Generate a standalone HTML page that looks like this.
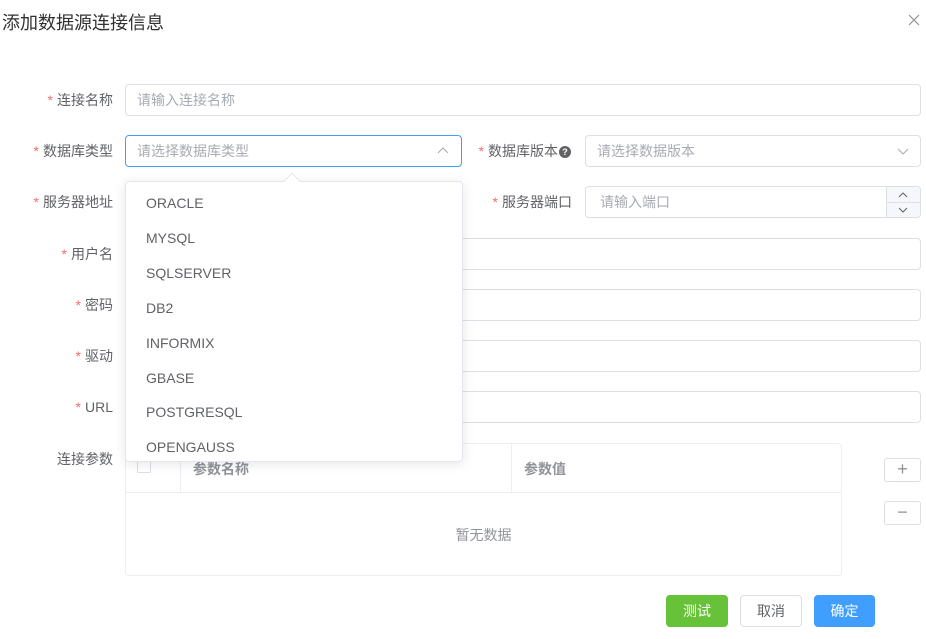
<!DOCTYPE html>
<html><head><meta charset="utf-8"><style>
*{box-sizing:border-box;margin:0;padding:0}
body{width:926px;height:639px;background:#fff;font-family:"Liberation Sans","Noto Sans CJK SC",sans-serif;position:relative;overflow:hidden;color:#606266}
.a{position:absolute}
.lbl{position:absolute;font-size:14px;color:#606266;text-align:right;line-height:32px}
.lbl i{color:#f56c6c;font-style:normal;margin-right:4px}
.in{position:absolute;height:32px;border:1px solid #dcdfe6;border-radius:4px;font-size:14px;color:#a8abb2;line-height:30px;padding-left:11px;background:#fff}
.it{position:absolute;left:146px;font-size:14px;color:#606266}
.btn{position:absolute;height:32px;border-radius:4px;font-size:14px;line-height:32px;text-align:center;top:595px}
</style></head><body>
<div class="a" style="left:2px;top:9px;font-size:18px;color:#303133">添加数据源连接信息</div>
<svg class="a" style="left:908px;top:14px" width="12" height="12"><path d="M1 1L11 11M11 1L1 11" stroke="#909399" stroke-width="1.2"/></svg>

<div class="lbl" style="left:0;width:113px;top:84px"><i>*</i>连接名称</div>
<div class="in" style="left:125px;top:84px;width:796px">请输入连接名称</div>

<div class="lbl" style="left:0;width:113px;top:135px"><i>*</i>数据库类型</div>
<div class="in" style="left:125px;top:135px;width:337px;border-color:#409eff">请选择数据库类型</div>
<svg class="a" style="left:437px;top:146px" width="12" height="10"><path d="M1 7L6 2L11 7" stroke="#a8abb2" fill="none"/></svg>

<div class="lbl" style="left:460px;width:98px;top:135px"><i>*</i>数据库版本</div>
<div class="a" style="left:559px;top:146px;width:12px;height:12px;border-radius:50%;background:#606266;color:#fff;font-size:9px;line-height:12px;text-align:center;font-weight:bold">?</div>
<div class="in" style="left:585px;top:135px;width:336px">请选择数据版本</div>
<svg class="a" style="left:897px;top:146px" width="12" height="10"><path d="M1 3L6 8L11 3" stroke="#a8abb2" fill="none"/></svg>

<div class="lbl" style="left:0;width:113px;top:186px"><i>*</i>服务器地址</div>
<div class="lbl" style="left:460px;width:112px;top:186px"><i>*</i>服务器端口</div>
<div class="in" style="left:585px;top:186px;width:336px;padding-left:14px">请输入端口</div>
<div class="a" style="left:886px;top:187px;width:34px;height:30px;border-left:1px solid #dcdfe6;background:#f5f7fa;border-radius:0 4px 4px 0"></div>
<div class="a" style="left:886px;top:202px;width:34px;height:1px;background:#dcdfe6"></div>
<svg class="a" style="left:898px;top:191px" width="10" height="8"><path d="M1 6L5 2L9 6" stroke="#606266" fill="none"/></svg>
<svg class="a" style="left:898px;top:206px" width="10" height="8"><path d="M1 2L5 6L9 2" stroke="#606266" fill="none"/></svg>

<div class="lbl" style="left:0;width:113px;top:238px"><i>*</i>用户名</div>
<div class="in" style="left:125px;top:238px;width:796px"></div>
<div class="lbl" style="left:0;width:113px;top:289px"><i>*</i>密码</div>
<div class="in" style="left:125px;top:289px;width:796px"></div>
<div class="lbl" style="left:0;width:113px;top:340px"><i>*</i>驱动</div>
<div class="in" style="left:125px;top:340px;width:796px"></div>
<div class="lbl" style="left:0;width:113px;top:391px"><i>*</i>URL</div>
<div class="in" style="left:125px;top:391px;width:796px"></div>
<div class="lbl" style="left:0;width:113px;top:443px">连接参数</div>

<div class="a" style="left:125px;top:443px;width:717px;height:133px;border:1px solid #ebeef5;border-radius:4px"></div>
<div class="a" style="left:126px;top:492px;width:715px;height:1px;background:#ebeef5"></div>
<div class="a" style="left:180px;top:444px;width:1px;height:48px;background:#ebeef5"></div>
<div class="a" style="left:511px;top:444px;width:1px;height:48px;background:#ebeef5"></div>
<div class="a" style="left:137px;top:459px;width:14px;height:14px;border:1px solid #dcdfe6;border-radius:2px"></div>
<div class="a" style="left:193px;top:459px;font-size:14px;font-weight:bold;color:#909399">参数名称</div>
<div class="a" style="left:524px;top:459px;font-size:14px;font-weight:bold;color:#909399">参数值</div>
<div class="a" style="left:125px;top:525px;width:717px;text-align:center;font-size:14px;color:#909399">暂无数据</div>

<div class="a" style="left:884px;top:458px;width:37px;height:24px;border:1px solid #dcdfe6;border-radius:3px;text-align:center;line-height:21px;font-size:18px;color:#909399">+</div>
<div class="a" style="left:884px;top:501px;width:37px;height:24px;border:1px solid #dcdfe6;border-radius:3px;text-align:center;line-height:21px;font-size:18px;color:#909399">−</div>

<div class="btn" style="left:666px;width:62px;background:#67c23a;color:#fff">测试</div>
<div class="btn" style="left:740px;width:62px;border:1px solid #dcdfe6;line-height:30px;color:#606266">取消</div>
<div class="btn" style="left:814px;width:61px;background:#409eff;color:#fff">确定</div>

<div class="a" style="left:125px;top:181px;width:338px;height:281px;background:#fff;border:1px solid #e4e7ed;border-radius:4px;box-shadow:0 2px 12px rgba(0,0,0,.1)"></div>
<div class="a" style="left:286px;top:175px;width:12px;height:12px;background:#fff;border-left:1px solid #e4e7ed;border-top:1px solid #e4e7ed;transform:rotate(45deg)"></div>
<div class="it" style="top:195px">ORACLE</div>
<div class="it" style="top:230px">MYSQL</div>
<div class="it" style="top:265px">SQLSERVER</div>
<div class="it" style="top:300px">DB2</div>
<div class="it" style="top:335px">INFORMIX</div>
<div class="it" style="top:370px">GBASE</div>
<div class="it" style="top:404px">POSTGRESQL</div>
<div class="it" style="top:439px">OPENGAUSS</div>
</body></html>
